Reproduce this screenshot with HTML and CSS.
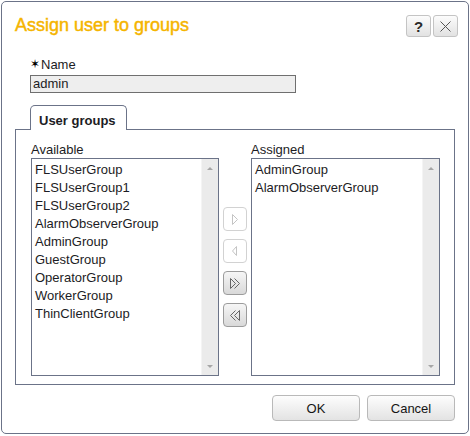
FILE: index.html
```html
<!DOCTYPE html>
<html>
<head>
<meta charset="utf-8">
<link rel="stylesheet" href="styles.css">
</head>
<body>
<div class="dialog">
  <div class="header">
    <div class="title">Assign user to groups</div>
    <div class="hbtns">
      <button class="hbtn help">?</button>
      <button class="hbtn close"><svg width="11" height="11" viewBox="0 0 11 11"><path d="M0.5 0.5L10.5 10.5M10.5 0.5L0.5 10.5" stroke="#555" stroke-width="1" fill="none"/></svg></button>
    </div>
  </div>
  <div class="field">
    <div class="label"><span class="req">✶</span>Name</div>
    <div class="input">admin</div>
  </div>
  <div class="tabs">
    <div class="tab">User groups</div>
    <div class="panel">
      <div class="col col-left">
        <div class="collabel">Available</div>
        <div class="list">
          <div class="items">
            <div class="item">FLSUserGroup</div>
            <div class="item">FLSUserGroup1</div>
            <div class="item">FLSUserGroup2</div>
            <div class="item">AlarmObserverGroup</div>
            <div class="item">AdminGroup</div>
            <div class="item">GuestGroup</div>
            <div class="item">OperatorGroup</div>
            <div class="item">WorkerGroup</div>
            <div class="item">ThinClientGroup</div>
          </div>
          <div class="sb"><span class="up"></span><span class="down"></span></div>
        </div>
      </div>
      <div class="moves">
        <button class="mv disabled"><svg width="24" height="24" viewBox="0 0 24 24"><path d="M9.5 7.5L14.5 12.5L9.5 17.5Z" fill="none" stroke="#c4c4c4"/></svg></button>
        <button class="mv disabled"><svg width="24" height="24" viewBox="0 0 24 24"><path d="M13.5 7.5L9.5 12L13.5 16.5Z" fill="none" stroke="#c4c4c4"/></svg></button>
        <button class="mv"><svg width="24" height="24" viewBox="0 0 24 24"><path d="M7.5 7.5L12.5 12.5L7.5 17.5Z M11.5 7.5L16.5 12.5L11.5 17.5" fill="none" stroke="#666"/></svg></button>
        <button class="mv"><svg width="24" height="24" viewBox="0 0 24 24"><path d="M16.5 7.5L11.5 12.5L16.5 17.5Z M12.5 7.5L7.5 12.5L12.5 17.5" fill="none" stroke="#666"/></svg></button>
      </div>
      <div class="col col-right">
        <div class="collabel">Assigned</div>
        <div class="list">
          <div class="items">
            <div class="item">AdminGroup</div>
            <div class="item">AlarmObserverGroup</div>
          </div>
          <div class="sb"><span class="up"></span><span class="down"></span></div>
        </div>
      </div>
    </div>
  </div>
  <div class="footer">
    <button class="btn">OK</button>
    <button class="btn">Cancel</button>
  </div>
</div>
</body>
</html>
```

FILE: styles.css
```css
body {
  margin: 0;
  background: #ffffff;
  font-family: "Liberation Sans", Arial, sans-serif;
  font-size: 13px;
  color: #1c1c24;
}

.dialog {
  margin: 1px 0 0 1px;
  width: 468px;
  height: 433px;
  box-sizing: border-box;
  border: 1px solid #6b7388;
  border-radius: 5px;
  display: flex;
  flex-direction: column;
  background: #fff;
}

.header {
  display: flex;
  justify-content: space-between;
  align-items: flex-start;
  padding: 12px 10px 0 13px;
  height: 22px;
}

.title {
  font-size: 18px;
  line-height: 22px;
  color: #f5b400;
  -webkit-text-stroke: 0.45px #f5b400;
}

.hbtns {
  display: flex;
  gap: 2px;
  margin-top: 1px;
}

.hbtn {
  width: 25px;
  height: 22px;
  box-sizing: border-box;
  border: 1px solid #c4c4c4;
  border-radius: 3px;
  background: linear-gradient(#fcfcfc, #e2e2e2);
  padding: 0;
  display: flex;
  align-items: center;
  justify-content: center;
}

.help {
  font-family: "Liberation Sans", Arial, sans-serif;
  font-weight: bold;
  font-size: 15px;
  color: #2a2a2a;
}

.field {
  margin: 21px 0 0 28px;
}

.label {
  line-height: 15px;
  display: flex;
  align-items: center;
}

.req {
  font-family: "DejaVu Sans", sans-serif;
  font-size: 12px;
  width: 11px;
  color: #000;
}

.input {
  margin-top: 3px;
  width: 266px;
  height: 18px;
  box-sizing: border-box;
  border: 1px solid #6f6f6f;
  background: #eeeeee;
  padding-left: 2px;
  line-height: 16px;
}

.tabs {
  margin: 12px 0 0 13px;
}

.tab {
  position: relative;
  z-index: 1;
  margin-left: 15px;
  margin-bottom: -1px;
  width: 97px;
  height: 25px;
  box-sizing: border-box;
  border: 1px solid #6b7388;
  border-bottom: none;
  border-radius: 5px 5px 0 0;
  padding: 7px 0 2px 8px;
  font-weight: bold;
  line-height: 15px;
  background: #fff;
}

.panel {
  width: 440px;
  height: 256px;
  box-sizing: border-box;
  border: 1px solid #6b7388;
  display: flex;
  padding: 12px 14px 8px 15px;
}

.col {
  display: flex;
  flex-direction: column;
}

.col-left {
  width: 188px;
}

.col-right {
  width: 189px;
}

.collabel {
  line-height: 15px;
  margin-bottom: 1px;
}

.list {
  height: 218px;
  box-sizing: border-box;
  border: 1px solid #6b7388;
  display: flex;
}

.items {
  flex: 1;
  padding: 2px 0 0 3px;
  line-height: 18px;
}

.sb {
  width: 16px;
  background: #ebebeb;
  border-left: 1px solid #f4f4f4;
  display: flex;
  flex-direction: column;
  justify-content: space-between;
  align-items: center;
  padding: 8px 0 7px;
}

.up {
  width: 0;
  height: 0;
  border-left: 3px solid transparent;
  border-right: 3px solid transparent;
  border-bottom: 3px solid #a6a6a6;
}

.down {
  width: 0;
  height: 0;
  border-left: 3px solid transparent;
  border-right: 3px solid transparent;
  border-top: 3px solid #a6a6a6;
}

.moves {
  width: 24px;
  margin: 0 4px;
  padding-top: 65px;
  display: flex;
  flex-direction: column;
  gap: 8px;
}

.mv {
  width: 24px;
  height: 24px;
  box-sizing: border-box;
  padding: 0;
  border: 1px solid #9c9c9c;
  border-radius: 4px;
  background: linear-gradient(#f6f6f6, #d9d9d9);
  display: flex;
  align-items: center;
  justify-content: center;
}

.mv svg {
  margin: -1px;
}

.mv.disabled {
  border-color: #d2d2d2;
  background: #ffffff;
}

.footer {
  display: flex;
  justify-content: flex-end;
  gap: 7px;
  padding: 10px 13px 0 0;
}

.btn {
  width: 88px;
  height: 26px;
  box-sizing: border-box;
  border: 1px solid #b9b9b9;
  border-radius: 4px;
  background: linear-gradient(#fdfdfd, #e3e3e3);
  font-family: "Liberation Sans", Arial, sans-serif;
  font-size: 13px;
  color: #151515;
  padding: 0;
}
```
